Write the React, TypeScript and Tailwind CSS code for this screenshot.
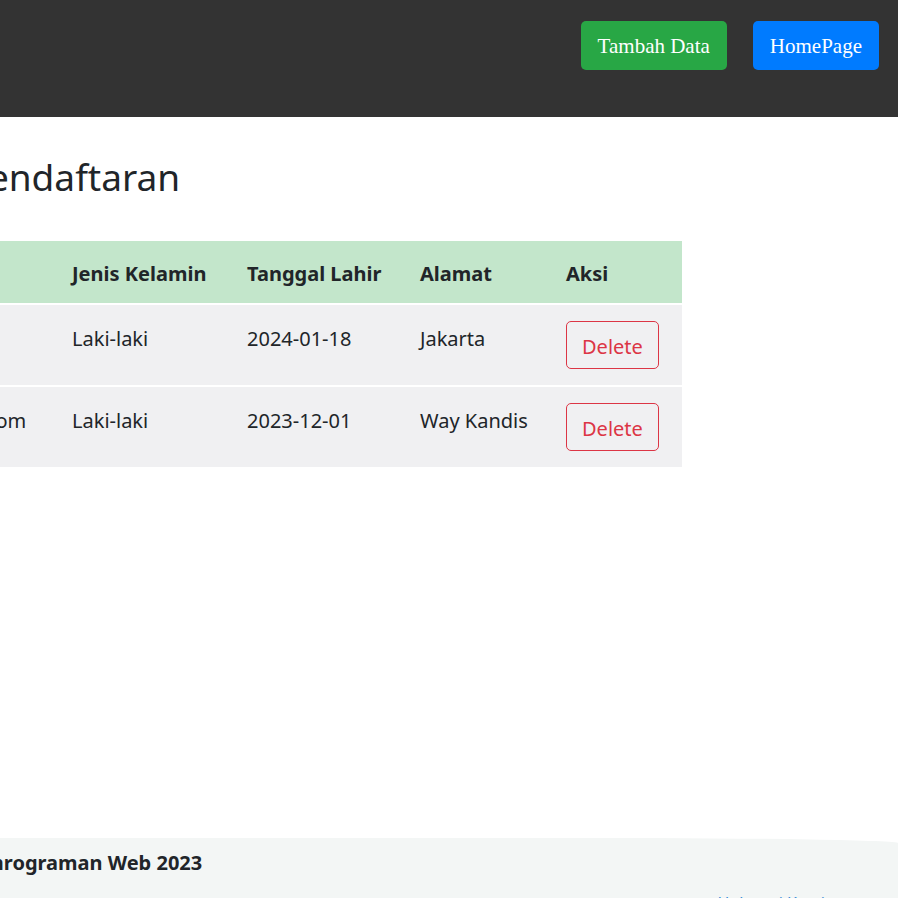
import React from "react";

const rows = [
  { email: "ani@gmail.com", jk: "Laki-laki", tgl: "2024-01-18", alamat: "Jakarta" },
  { email: "andika@gmail.com", jk: "Laki-laki", tgl: "2023-12-01", alamat: "Way Kandis" },
];

export default function App() {
  return (
    <div
      className="w-[898px] h-[898px] overflow-hidden bg-white text-[#212529]"
      style={{ fontFamily: '"Noto Sans", "Open Sans", sans-serif' }}
    >
      <header className="h-[117px] bg-[#333333] flex justify-end items-start pt-[21px] pr-[19px] gap-[26px]">
        <button
          className="h-[49px] px-[17px] pt-[1px] rounded-[5px] bg-[#28a745] text-white text-[21px] leading-none"
          style={{ fontFamily: '"Liberation Serif", serif' }}
        >
          Tambah Data
        </button>
        <button
          className="h-[49px] px-[17px] pt-[1px] rounded-[5px] bg-[#007bff] text-white text-[21px] leading-none"
          style={{ fontFamily: '"Liberation Serif", serif' }}
        >
          HomePage
        </button>
      </header>

      <main className="h-[721px] pt-[36px]">
        <h1 className="ml-[-126px] text-[37px] leading-[48px] font-normal whitespace-nowrap">
          Data Pendaftaran
        </h1>
        <table className="ml-[-165px] mt-[40px] border-collapse text-[20px] leading-[30px]">
          <thead>
            <tr className="bg-[#c3e6cb]">
              <th className="w-[225px] px-3 pt-[18px] pb-[14px] text-left font-bold">Email</th>
              <th className="w-[175px] px-3 pt-[18px] pb-[14px] text-left font-bold">Jenis Kelamin</th>
              <th className="w-[173px] px-3 pt-[18px] pb-[14px] text-left font-bold">Tanggal Lahir</th>
              <th className="w-[146px] px-3 pt-[18px] pb-[14px] text-left font-bold">Alamat</th>
              <th className="w-[128px] px-3 pt-[18px] pb-[14px] text-left font-bold">Aksi</th>
            </tr>
          </thead>
          <tbody>
            {rows.map((r) => (
              <tr key={r.email} className="bg-[#f0f0f2] border-t-2 border-white">
                <td className="px-3 pt-[19px] pb-[13px] align-top whitespace-nowrap">{r.email}</td>
                <td className="px-3 pt-[19px] pb-[13px] align-top">{r.jk}</td>
                <td className="px-3 pt-[19px] pb-[13px] align-top">{r.tgl}</td>
                <td className="px-3 pt-[19px] pb-[13px] align-top whitespace-nowrap">{r.alamat}</td>
                <td className="px-3 pt-4 pb-4 align-top">
                  <button className="h-[48px] px-[15px] pt-[3px] rounded-[5px] border border-[#dc3545] text-[#dc3545] text-[20px] leading-[30px] bg-transparent">
                    Delete
                  </button>
                </td>
              </tr>
            ))}
          </tbody>
        </table>
      </main>

      <footer className="bg-[#f3f6f5] rounded-tr-[300px_5px] pt-[10px] h-[120px]">
        <p className="ml-[-40px] text-[20px] leading-[30px] font-bold whitespace-nowrap">
          Pemrograman Web 2023
        </p>
        <div className="flex justify-end pr-[73px] mt-[13px]">
          <span className="text-[16px] leading-[24px] text-[#3b8fd8]">Hubungi Kami</span>
        </div>
      </footer>
    </div>
  );
}
